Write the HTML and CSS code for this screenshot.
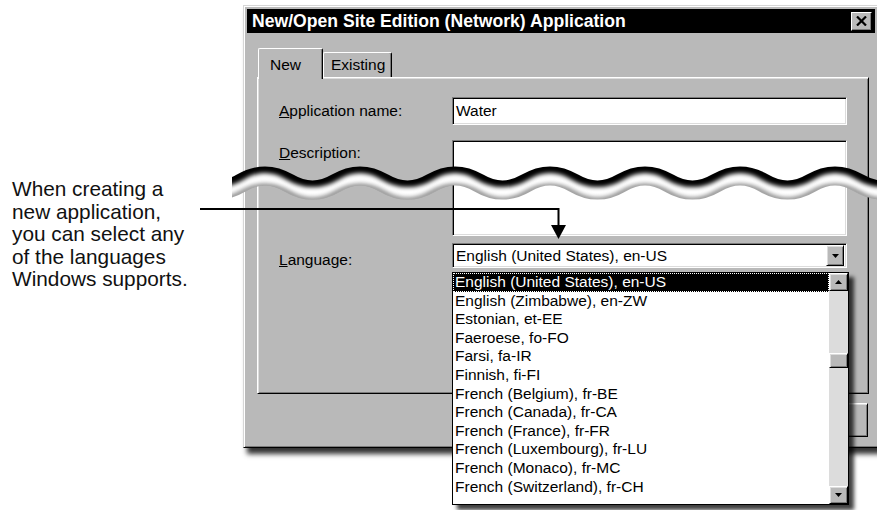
FILE: index.html
```html
<!DOCTYPE html>
<html lang="en">
<head>
  <meta charset="UTF-8" />
  <title>New/Open Site Edition (Network) Application</title>
  <link rel="stylesheet" href="styles.css">
</head>
<body>
  <div class="page">

    <!-- Texto de la llamada -->
    <p class="callout">When creating a<br>new application,<br>you can select any<br>of the languages<br>Windows supports.</p>

    <div class="dialog">
      <div class="titlebar">
        <span>New/Open Site Edition (Network) Application</span>
        <span class="close">
          <svg width="11" height="10" viewBox="0 0 11 10"><path d="M1 0.5 L10 9.5 M10 0.5 L1 9.5" stroke="#000" stroke-width="2.2" /></svg>
        </span>
      </div>

      <div class="tabs">
        <div class="tab active">New</div>
        <div class="tab">Existing</div>
      </div>

      <div class="panel">
        <div class="form">
          <label><u>A</u>pplication name:</label>
          <div class="field input">Water</div>

          <label class="top"><u>D</u>escription:</label>
          <div class="field memo"></div>

          <label><u>L</u>anguage:</label>
          <div class="field combo">
            <span>English (United States), en-US</span>
            <span class="btn3d arrow-btn">
              <svg width="7" height="4" viewBox="0 0 7 4"><polygon points="0,0 7,0 3.5,4" fill="#000" /></svg>
            </span>
          </div>
        </div>
      </div>

      <div class="buttons">
        <div class="btn3d button">OK</div>
        <div class="btn3d button">Cancel</div>
      </div>
    </div>

    <!-- Corte ondulado -->
    <svg class="tear" width="645" height="60" viewBox="232 150 645 60">
      <defs>
        <path id="wave" d="M193.75 183 q23.75 14 47.5 0 t47.5 0 t47.5 0 t47.5 0 t47.5 0 t47.5 0 t47.5 0 t47.5 0 t47.5 0 t47.5 0 t47.5 0 t47.5 0 t47.5 0 t47.5 0 t47.5 0 t47.5 0" />
        <filter id="soft" filterUnits="userSpaceOnUse" x="150" y="130" width="800" height="100">
          <feGaussianBlur stdDeviation="2.2" />
        </filter>
        <mask id="band" maskUnits="userSpaceOnUse" x="150" y="130" width="800" height="100">
          <use href="#wave" fill="none" stroke="#fff" stroke-width="19" />
        </mask>
      </defs>
      <g mask="url(#band)">
        <use href="#wave" fill="none" stroke="#fff" stroke-width="19" />
        <use href="#wave" transform="translate(0,-9)" fill="none" stroke="#000" stroke-width="12" filter="url(#soft)" />
        <use href="#wave" transform="translate(0,10)" fill="none" stroke="#8a8a8a" stroke-width="5" filter="url(#soft)" />
      </g>
    </svg>

    <!-- Lista desplegada -->
    <div class="listbox">
      <ul class="options">
        <li class="selected">English (United States), en-US</li>
        <li>English (Zimbabwe), en-ZW</li>
        <li>Estonian, et-EE</li>
        <li>Faeroese, fo-FO</li>
        <li>Farsi, fa-IR</li>
        <li>Finnish, fi-FI</li>
        <li>French (Belgium), fr-BE</li>
        <li>French (Canada), fr-CA</li>
        <li>French (France), fr-FR</li>
        <li>French (Luxembourg), fr-LU</li>
        <li>French (Monaco), fr-MC</li>
        <li>French (Switzerland), fr-CH</li>
      </ul>
      <div class="scrollbar">
        <span class="btn3d sb-btn">
          <svg width="7" height="4" viewBox="0 0 7 4"><polygon points="0,4 7,4 3.5,0" fill="#000" /></svg>
        </span>
        <span class="btn3d thumb"></span>
        <span class="btn3d sb-btn">
          <svg width="7" height="4" viewBox="0 0 7 4"><polygon points="0,0 7,0 3.5,4" fill="#000" /></svg>
        </span>
      </div>
    </div>

    <!-- Flecha de la llamada -->
    <svg class="pointer" width="877" height="510" viewBox="0 0 877 510">
      <path d="M200 209 H558.5 V228" fill="none" stroke="#000" stroke-width="2" />
      <polygon points="551,225 566,225 558.5,239" fill="#000" />
    </svg>

  </div>
</body>
</html>
```

FILE: styles.css
```css
body {
  margin: 0;
  background: #fff;
  font-family: "Liberation Sans", Arial, sans-serif;
}

.page {
  position: relative;
  width: 877px;
  height: 510px;
  display: flex;
  overflow: hidden;
}

.callout {
  width: 231px;
  flex-shrink: 0;
  margin: 0;
  padding: 178px 0 0 12px;
  font-size: 20.8px;
  line-height: 22.5px;
  color: #111;
}

/* Ventana */
.dialog {
  flex-shrink: 0;
  margin-top: 5px;
  width: 636px;
  height: 443px;
  box-sizing: border-box;
  padding: 3px;
  background: #b9b9b9;
  border: 1px solid;
  border-color: #d6d6d6 #000 #000 #d6d6d6;
  box-shadow: inset 1px 1px #fff, inset -1px -1px #7b7b7b, 4px 6px 5px rgba(0,0,0,0.8);
  font-size: 15.5px;
  color: #000;
  display: flex;
  flex-direction: column;
}

.titlebar {
  height: 24px;
  background: #000;
  color: #fff;
  font-weight: bold;
  font-size: 17.6px;
  display: flex;
  align-items: center;
  justify-content: space-between;
  padding: 0 3px 0 5px;
}

.close {
  width: 21px;
  height: 19px;
  box-sizing: border-box;
  background: #b9b9b9;
  border: 1px solid;
  border-color: #fff #000 #000 #fff;
  box-shadow: inset -1px -1px #7b7b7b;
  display: flex;
  align-items: center;
  justify-content: center;
}

.tabs {
  margin: 15px 0 0 11px;
  height: 29px;
  display: flex;
  align-items: flex-end;
}

.tab {
  height: 25px;
  box-sizing: border-box;
  padding: 3px 0 0 7px;
  width: 69px;
  border: 1px solid;
  border-bottom: none;
  border-color: #fff #000 #000 #fff;
  border-radius: 2px 2px 0 0;
  box-shadow: inset -1px 0 #7b7b7b;
  background: #b9b9b9;
}

.tab.active {
  position: relative;
  z-index: 1;
  width: 65px;
  height: 31px;
  margin-bottom: -2px;
  padding: 7px 0 0 11px;
}

.panel {
  margin-left: 10px;
  width: 612px;
  height: 317px;
  box-sizing: border-box;
  border: 1px solid;
  border-color: #fff #000 #000 #fff;
  box-shadow: inset 1px 1px #dcdcdc, inset -1px -1px #7b7b7b;
}

.form {
  padding: 19px 0 0 21px;
  display: grid;
  grid-template-columns: 173px 395px;
  grid-template-rows: 28px 92px 25px;
  row-gap: 15px;
}

.form label {
  align-self: center;
}

.form label.top {
  align-self: start;
  padding-top: 4px;
}

.field {
  box-sizing: border-box;
  background: #fff;
  border: 1px solid;
  border-color: #7b7b7b #fff #fff #7b7b7b;
  box-shadow: inset 1px 1px #000, inset -1px -1px #dcdcdc;
  padding: 2px 3px;
  display: flex;
  align-items: center;
}

.memo {
  margin-bottom: -4px;
}

.combo {
  margin-top: -4px;
  margin-bottom: 4px;
  justify-content: space-between;
  padding: 2px;
  height: 25px;
  align-self: stretch;
}

.combo span:first-child {
  padding-left: 1px;
}

.btn3d {
  box-sizing: border-box;
  background: #b9b9b9;
  border: 1px solid;
  border-color: #fff #000 #000 #fff;
  box-shadow: inset 1px 1px #dcdcdc, inset -1px -1px #7b7b7b;
  display: flex;
  align-items: center;
  justify-content: center;
}

.arrow-btn {
  width: 18px;
  height: 21px;
}

.buttons {
  margin: 9px 7px 0 0;
  display: flex;
  justify-content: flex-end;
  gap: 8px;
}

.button {
  width: 101px;
  height: 34px;
}

/* Lista desplegada */
.listbox {
  position: absolute;
  left: 452px;
  top: 272px;
  width: 397px;
  height: 233px;
  box-sizing: border-box;
  border: 1px solid #000;
  background: #fff;
  box-shadow: 5px 5px 4px rgba(0,0,0,0.75);
  display: flex;
  font-size: 15.5px;
}

.options {
  flex: 1;
  margin: 0;
  padding: 0;
  list-style: none;
}

.options li {
  height: 18.6px;
  line-height: 18.6px;
  padding-left: 2px;
  white-space: nowrap;
}

.options li.selected {
  background: #000;
  color: #fff;
  outline: 1px dotted #fff;
  outline-offset: -1px;
}

.scrollbar {
  width: 19px;
  background: #dcdcdc;
  display: flex;
  flex-direction: column;
}

.sb-btn {
  height: 18px;
}

.thumb {
  height: 15px;
  margin: 62px 0 auto;
}

.tear {
  position: absolute;
  left: 232px;
  top: 150px;
}

.pointer {
  position: absolute;
  left: 0;
  top: 0;
}
```
